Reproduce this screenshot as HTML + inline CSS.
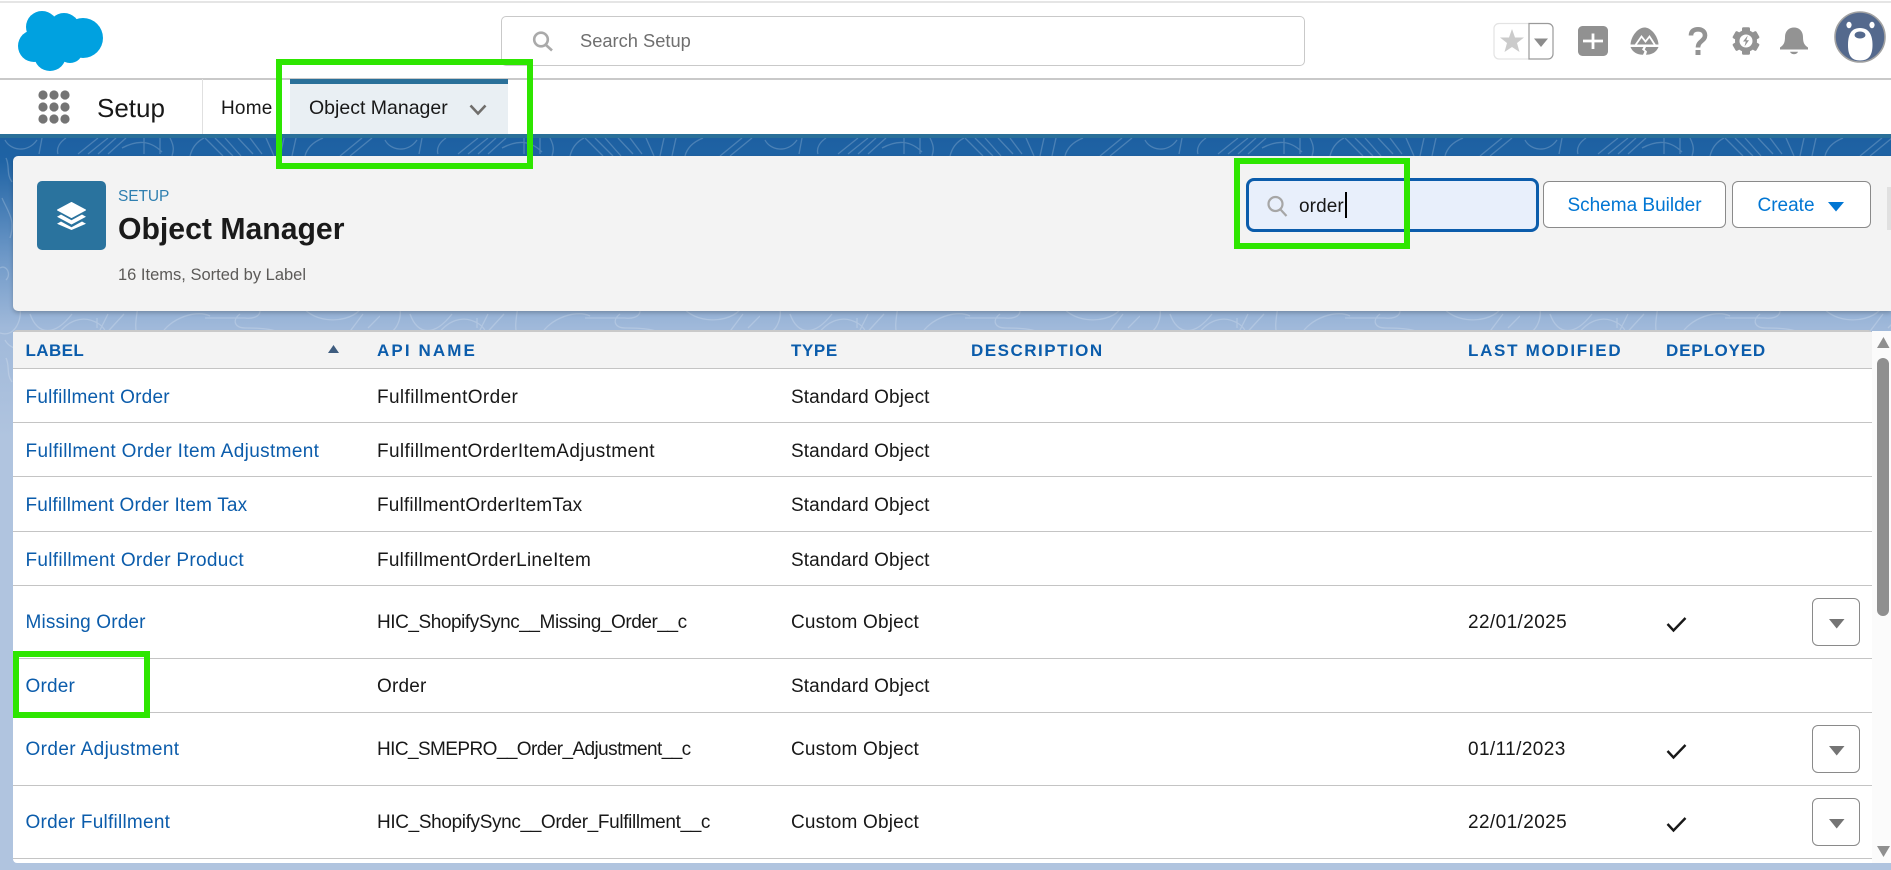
<!DOCTYPE html>
<html><head><meta charset="utf-8"><title>Object Manager</title>
<style>
html,body{margin:0;padding:0;width:1891px;height:870px;overflow:hidden;background:#fff;font-family:"Liberation Sans",sans-serif}
.a{position:absolute;white-space:nowrap}
.c{font-size:19px;line-height:24px;color:#181818}
.l{color:#0b5cab;margin-left:-.5px}
.h{font-size:17px;font-weight:bold;line-height:20px;color:#0b5cab;top:341px}
.ln{position:absolute;left:13px;width:1859px;height:1px;background:#c4c4c4}
.dd{position:absolute;left:1812px;width:46px;height:46px;border:1px solid #8a8a8a;border-radius:6px;background:#fff}
.g{position:absolute;border:6px solid #2ee600;box-sizing:border-box}
</style></head><body>

<div class="a" style="left:0;top:1px;width:1891px;height:2px;background:#e5e5e5"></div>
<div class="a" style="left:0;top:78px;width:1891px;height:1.5px;background:#c9c9c9"></div>

<!-- background -->
<div class="a" style="left:0;top:134px;width:1891px;height:4px;background:#2a7099"></div>
<div class="a" style="left:0;top:138px;width:1891px;height:732px;background:linear-gradient(180deg,#1d60a2 0,#1f63a4 22px,#6f99c8 120px,#a0b9da 190px,#b0c4df 300px,#b0c4df 100%)"></div>
<svg class="a" style="left:0;top:138px" width="1891" height="260">
<defs><pattern id="t" width="380" height="200" patternUnits="userSpaceOnUse">
<g fill="none" stroke="#fff" stroke-opacity=".2" stroke-width="1.3">
<path d="M5 2c5 10 22 14 32 0M42 0l-3 16M58 16c-2-6 2-12 8-16M78 16L98 0M88 16L108 0M98 16l18-16M108 16l18-16M122 10c15-8 28-8 40 4M144 0v16M160 0v16M170 0c4 8 4 12 2 18M190 18c2-8 6-14 14-18M205 0l18 18M215 0l18 18M225 0l16 18M238 0l15 16M250 0l12 16M266 0l8 18M280 18l4-18M292 18l4-18M305 18c2-8 8-14 18-18M340 18l22-18M350 18l22-18"/>
<path d="M0 195c15 5 22-14 20-24M30 176c8 22 25 22 42 0M55 200c12-18 28-24 44-14 6 4 8 10 8 14M97 180v10M108 176l-12 24M124 176l-22 24M138 168c-2 14-4 22 0 32M160 200c4-16 34-30 50-22M205 180h40c14 2 20-8 10-12M240 176c-8 6-6 14 6 14 20 0 36 2 40 10M300 164c8 20 44 24 60 8M345 200l18-24M368 190l12-12"/>
<path d="M2 60c6 14 14 22 8 40M0 130c6-4 12 6 6 12M6 20c4 8 0 16 6 24"/>
</g></pattern></defs>
<rect width="1891" height="260" fill="url(#t)"/>
</svg>

<!-- nav -->
<div class="a" style="left:97px;top:92px;font-size:26px;line-height:32px;color:#181818">Setup</div>
<div class="a" style="left:202px;top:79px;width:1px;height:55px;background:#e0e0e0"></div>
<div class="a" style="left:221px;top:97px;font-size:19px;line-height:24px;color:#181818;letter-spacing:.2px">Home</div>
<div class="a" style="left:290px;top:79px;width:218px;height:55px;background:#e9eff3;border-top:5px solid #2a7099;box-sizing:border-box"></div>
<div class="a" style="left:309px;top:96px;font-size:19.5px;line-height:24px;color:#181818">Object Manager</div>

<!-- global search -->
<div class="a" style="left:501px;top:16px;width:804px;height:50px;box-sizing:border-box;border:1px solid #c9c9c9;border-radius:5px;background:#fff"></div>
<div class="a" style="left:580px;top:29px;font-size:18.3px;line-height:24px;color:#6f6f6f">Search Setup</div>

<!-- card -->
<div class="a" style="left:13px;top:156px;width:1878px;height:155px;background:#f3f3f3;border-radius:5px 0 0 5px;box-shadow:0 2px 4px rgba(0,0,0,.22)"></div>
<div class="a" style="left:37px;top:181px;width:69px;height:69px;border-radius:5px;background:#2a739e"></div>
<div class="a" style="left:118px;top:187px;font-size:15.500px;line-height:20px;color:#2f7fb0;letter-spacing:-.1px">SETUP</div>
<div class="a" style="left:118px;top:211px;font-size:30.200px;font-weight:bold;line-height:38px;color:#1a1a1a">Object Manager</div>
<div class="a" style="left:118px;top:264px;font-size:16.500px;line-height:22px;color:#5c5a58">16 Items, Sorted by Label</div>

<div class="a" style="left:1246px;top:178px;width:293px;height:54px;box-sizing:border-box;border:3.500px solid #0b5cab;border-radius:8px;background:#e8effb"></div>
<div class="a" style="left:1299px;top:195px;font-size:19px;line-height:24px;color:#181818;letter-spacing:.1px">order</div>
<div class="a" style="left:1345px;top:192px;width:1.500px;height:26px;background:#000"></div>
<div class="a" style="left:1543px;top:181px;width:183px;height:47px;box-sizing:border-box;border:1px solid #8a8a8a;border-radius:6px;background:#fff;text-align:center;font-size:19px;line-height:48px;color:#0176d3">Schema Builder</div>
<div class="a" style="left:1732px;top:181px;width:139px;height:47px;box-sizing:border-box;border:1px solid #8a8a8a;border-radius:6px;background:#fff;padding-left:24.500px;font-size:19px;line-height:48px;color:#0176d3">Create</div>
<div class="a" style="left:1887px;top:187px;width:4px;height:43px;background:#e0e0e0"></div>

<!-- table -->
<div class="a" style="left:13px;top:330px;width:1859px;height:533px;background:#fff;border-top:2px solid #c9c9c9;box-sizing:border-box;border-radius:4px 4px 0 4px"></div>
<div class="a" style="left:13px;top:332px;width:1859px;height:36px;background:#f3f3f3"></div>
<div class="a" style="left:1872px;top:331px;width:19px;height:532px;background:#fbfbfb"></div>
<div class="ln" style="top:368px"></div>
<div class="ln" style="top:422px"></div>
<div class="ln" style="top:476px"></div>
<div class="ln" style="top:531px"></div>
<div class="ln" style="top:585px"></div>
<div class="ln" style="top:658px"></div>
<div class="ln" style="top:712px"></div>
<div class="ln" style="top:785px"></div>
<div class="ln" style="top:858px"></div>

<div class="a h" style="left:25.500px;letter-spacing:.4px">LABEL</div>
<div class="a h" style="left:377px;letter-spacing:2.100px">API NAME</div>
<div class="a h" style="left:791px;letter-spacing:.6px">TYPE</div>
<div class="a h" style="left:971px;letter-spacing:1.500px">DESCRIPTION</div>
<div class="a h" style="left:1468px;letter-spacing:1.700px">LAST MODIFIED</div>
<div class="a h" style="left:1666px;letter-spacing:.8px">DEPLOYED</div>

<div class="a c l" style="left:26px;top:386px;letter-spacing:.23px">Fulfillment Order</div>
<div class="a c" style="left:377px;top:386px;letter-spacing:.38px">FulfillmentOrder</div>
<div class="a c" style="left:791px;top:386px;letter-spacing:.08px">Standard Object</div>

<div class="a c l" style="left:26px;top:440px;letter-spacing:.36px">Fulfillment Order Item Adjustment</div>
<div class="a c" style="left:377px;top:440px;letter-spacing:.36px">FulfillmentOrderItemAdjustment</div>
<div class="a c" style="left:791px;top:440px;letter-spacing:.08px">Standard Object</div>

<div class="a c l" style="left:26px;top:494px;letter-spacing:.18px">Fulfillment Order Item Tax</div>
<div class="a c" style="left:377px;top:494px;letter-spacing:.16px">FulfillmentOrderItemTax</div>
<div class="a c" style="left:791px;top:494px;letter-spacing:.08px">Standard Object</div>

<div class="a c l" style="left:26px;top:549px;letter-spacing:.29px">Fulfillment Order Product</div>
<div class="a c" style="left:377px;top:549px;letter-spacing:.25px">FulfillmentOrderLineItem</div>
<div class="a c" style="left:791px;top:549px;letter-spacing:.08px">Standard Object</div>

<div class="a c l" style="left:26px;top:611px;letter-spacing:.14px">Missing Order</div>
<div class="a c" style="left:377px;top:611px;letter-spacing:-.44px">HIC_ShopifySync__Missing_Order__c</div>
<div class="a c" style="left:791px;top:611px;letter-spacing:.18px">Custom Object</div>
<div class="a c" style="left:1468px;top:611px;letter-spacing:.4px">22/01/2025</div>
<div class="dd" style="top:598px"></div>

<div class="a c l" style="left:26px;top:675px;letter-spacing:.2px">Order</div>
<div class="a c" style="left:377px;top:675px;letter-spacing:.2px">Order</div>
<div class="a c" style="left:791px;top:675px;letter-spacing:.08px">Standard Object</div>

<div class="a c l" style="left:26px;top:738px;letter-spacing:.38px">Order Adjustment</div>
<div class="a c" style="left:377px;top:738px;letter-spacing:-.58px">HIC_SMEPRO__Order_Adjustment__c</div>
<div class="a c" style="left:791px;top:738px;letter-spacing:.18px">Custom Object</div>
<div class="a c" style="left:1468px;top:738px;letter-spacing:.4px">01/11/2023</div>
<div class="dd" style="top:725px"></div>

<div class="a c l" style="left:26px;top:811px;letter-spacing:.25px">Order Fulfillment</div>
<div class="a c" style="left:377px;top:811px;letter-spacing:-.36px">HIC_ShopifySync__Order_Fulfillment__c</div>
<div class="a c" style="left:791px;top:811px;letter-spacing:.18px">Custom Object</div>
<div class="a c" style="left:1468px;top:811px;letter-spacing:.4px">22/01/2025</div>
<div class="dd" style="top:798px"></div>

<!-- all icons drawn in page coordinates -->
<svg class="a" style="left:0;top:0;pointer-events:none" width="1891" height="870">
<!-- logo -->
<g fill="#00a1e0"><circle cx="42" cy="27" r="16"/><circle cx="64" cy="29" r="16"/><circle cx="83" cy="38" r="20"/><circle cx="34" cy="46" r="16"/><circle cx="50" cy="55" r="16"/><circle cx="70" cy="50" r="13"/><rect x="34" y="28" width="46" height="28"/></g>
<!-- app launcher -->
<g fill="#747474"><circle cx="43" cy="95" r="4.600"/><circle cx="54" cy="95" r="4.600"/><circle cx="65" cy="95" r="4.600"/><circle cx="43" cy="107" r="4.600"/><circle cx="54" cy="107" r="4.600"/><circle cx="65" cy="107" r="4.600"/><circle cx="43" cy="119" r="4.600"/><circle cx="54" cy="119" r="4.600"/><circle cx="65" cy="119" r="4.600"/></g>
<!-- tab chevron -->
<path d="M470.500 105.500L478 113.500L485.500 105.500" fill="none" stroke="#706e6b" stroke-width="2.600"/>
<!-- global search icon -->
<g fill="none" stroke="#aaa" stroke-width="2.600"><circle cx="541" cy="39.500" r="6.800"/><path d="M546 45L552 50.500"/></g>
<!-- favorites -->
<path d="M1529 23.500H1499a5 5 0 0 0-5 5V54a5 5 0 0 0 5 5h30" fill="none" stroke="#e3e3e3" stroke-width="1.200"/>
<path d="M1529 23.500h19a5 5 0 0 1 5 5V54a5 5 0 0 1-5 5h-19z" fill="#fff" stroke="#9a9a9a" stroke-width="1.200"/>
<polygon points="1512,29 1515,37.500 1524,37.500 1517,43 1519.500,52 1512,47 1504.500,52 1507,43 1500,37.500 1509,37.500" fill="#cbcbcb"/>
<polygon points="1534,38.500 1548,38.500 1541,47" fill="#8c8c8c"/>
<!-- plus -->
<rect x="1578" y="26" width="30" height="30" rx="4.500" fill="#919191"/>
<path d="M1593 33.500V49M1583 41H1603" stroke="#fff" stroke-width="2.800" fill="none"/>
<!-- trailhead -->
<path d="M1630.500 44.500C1631 36 1638 27.500 1644.500 27.500C1651 27.500 1658 36 1658.500 44.500Z" fill="#939393"/>
<path d="M1635.500 45L1641.500 36.500L1645.500 41.500L1649.500 36.500L1655 45" fill="none" stroke="#fff" stroke-width="1.800"/>
<path d="M1630.500 47H1643.500L1642 49.500L1644.500 51.500L1643 54.800C1637 54.800 1632.500 52 1630.500 47Z" fill="#939393"/>
<path d="M1646 47H1658.500C1656.500 52 1652 54.800 1646 54.800L1647 51.500L1644.800 49.500Z" fill="#939393"/>
<!-- help -->
<path d="M1691 35.500C1691 31 1694 29.300 1698 29.300C1702 29.300 1705 31.500 1705 35.500C1705 41 1698 41 1698 47.500" fill="none" stroke="#939393" stroke-width="4.600"/>
<rect x="1695.500" y="50" width="5" height="5" fill="#939393"/>
<!-- gear -->
<g fill="#939393"><circle cx="1746" cy="41" r="11"/>
<rect x="1742" y="27.300" width="8" height="27.400" rx="1.500"/>
<rect x="1742" y="27.300" width="8" height="27.400" rx="1.500" transform="rotate(60 1746 41)"/>
<rect x="1742" y="27.300" width="8" height="27.400" rx="1.500" transform="rotate(120 1746 41)"/></g>
<circle cx="1746" cy="41" r="6.500" fill="#fff"/>
<path d="M1747.800 35.500L1743 41.500H1745.800L1744.500 46.500L1749 40.300H1746.300Z" fill="#939393"/>
<!-- bell -->
<path d="M1780 47.500C1784 45 1785 42 1785 37C1785 31 1789 27.500 1794 27.500C1799 27.500 1803 31 1803 37C1803 42 1804 45 1808 47.500V49.500H1780Z" fill="#939393"/>
<path d="M1790 51.800H1798C1797 55 1791 55 1790 51.800Z" fill="#939393"/>
<!-- avatar -->
<defs><clipPath id="av"><circle cx="1860" cy="37" r="24.500"/></clipPath></defs>
<circle cx="1860" cy="37" r="25" fill="#54698d" stroke="#a2a2a2" stroke-width="1.600"/>
<g clip-path="url(#av)"><path d="M1860 28C1851 28 1848 35 1848 45C1848 55 1851 60.500 1860 60.500C1869 60.500 1872.500 55 1872.500 45C1872.500 35 1869 28 1860 28Z" fill="#fff"/></g>
<ellipse cx="1860" cy="35" rx="5.500" ry="3.500" fill="#54698d"/>
<ellipse cx="1849" cy="25" rx="2.600" ry="3.200" fill="#fff"/><ellipse cx="1872" cy="25" rx="2.600" ry="3.200" fill="#fff"/>
<!-- layers -->
<g fill="#fff">
<path d="M71.500 202.500L85.500 210L71.500 217.500L57.500 210Z" stroke="#fff" stroke-width="1" stroke-linejoin="round"/>
<path d="M61 214.500L71.500 220.200L82 214.500L86 216.800L71.500 224.500L57 216.800Z"/>
<path d="M61 221.500L71.500 227.200L82 221.500L86 223.800L71.500 230L57 223.800Z"/>
</g>
<!-- search in object manager -->
<g fill="none" stroke="#a6a6a6" stroke-width="2.200"><circle cx="1275.500" cy="204" r="7"/><path d="M1280.500 209.500L1286.500 216"/></g>
<!-- create caret -->
<polygon points="1828,202 1844,202 1836,211.500" fill="#0176d3"/>
<!-- sort -->
<polygon points="333.500,345 339,353 328,353" fill="#3e5c7f"/>
<!-- row carets and checks -->
<g fill="#747474"><polygon points="1829,619 1844.500,619 1836.700,628.500"/><polygon points="1829,746 1844.500,746 1836.700,755.500"/><polygon points="1829,819 1844.500,819 1836.700,828.500"/></g>
<g fill="none" stroke="#181818" stroke-width="2.400"><path d="M1667.500 624L1673.500 630.500L1685.500 618"/><path d="M1667.500 751L1673.500 757.500L1685.500 745"/><path d="M1667.500 824L1673.500 830.500L1685.500 818"/></g>
<!-- scrollbar -->
<rect x="1877" y="358" width="12" height="258" rx="6" fill="#8f8f8f"/>
<polygon points="1883.500,337 1889.500,348 1877,348" fill="#8f8f8f"/>
<polygon points="1877,846 1890,846 1883.500,857" fill="#8f8f8f"/>
</svg>

<!-- green annotations -->
<div class="g" style="left:276px;top:59px;width:257px;height:110px"></div>
<div class="g" style="left:1234px;top:158px;width:176px;height:91px"></div>
<div class="g" style="left:13px;top:651px;width:137px;height:67px"></div>
</body></html>
